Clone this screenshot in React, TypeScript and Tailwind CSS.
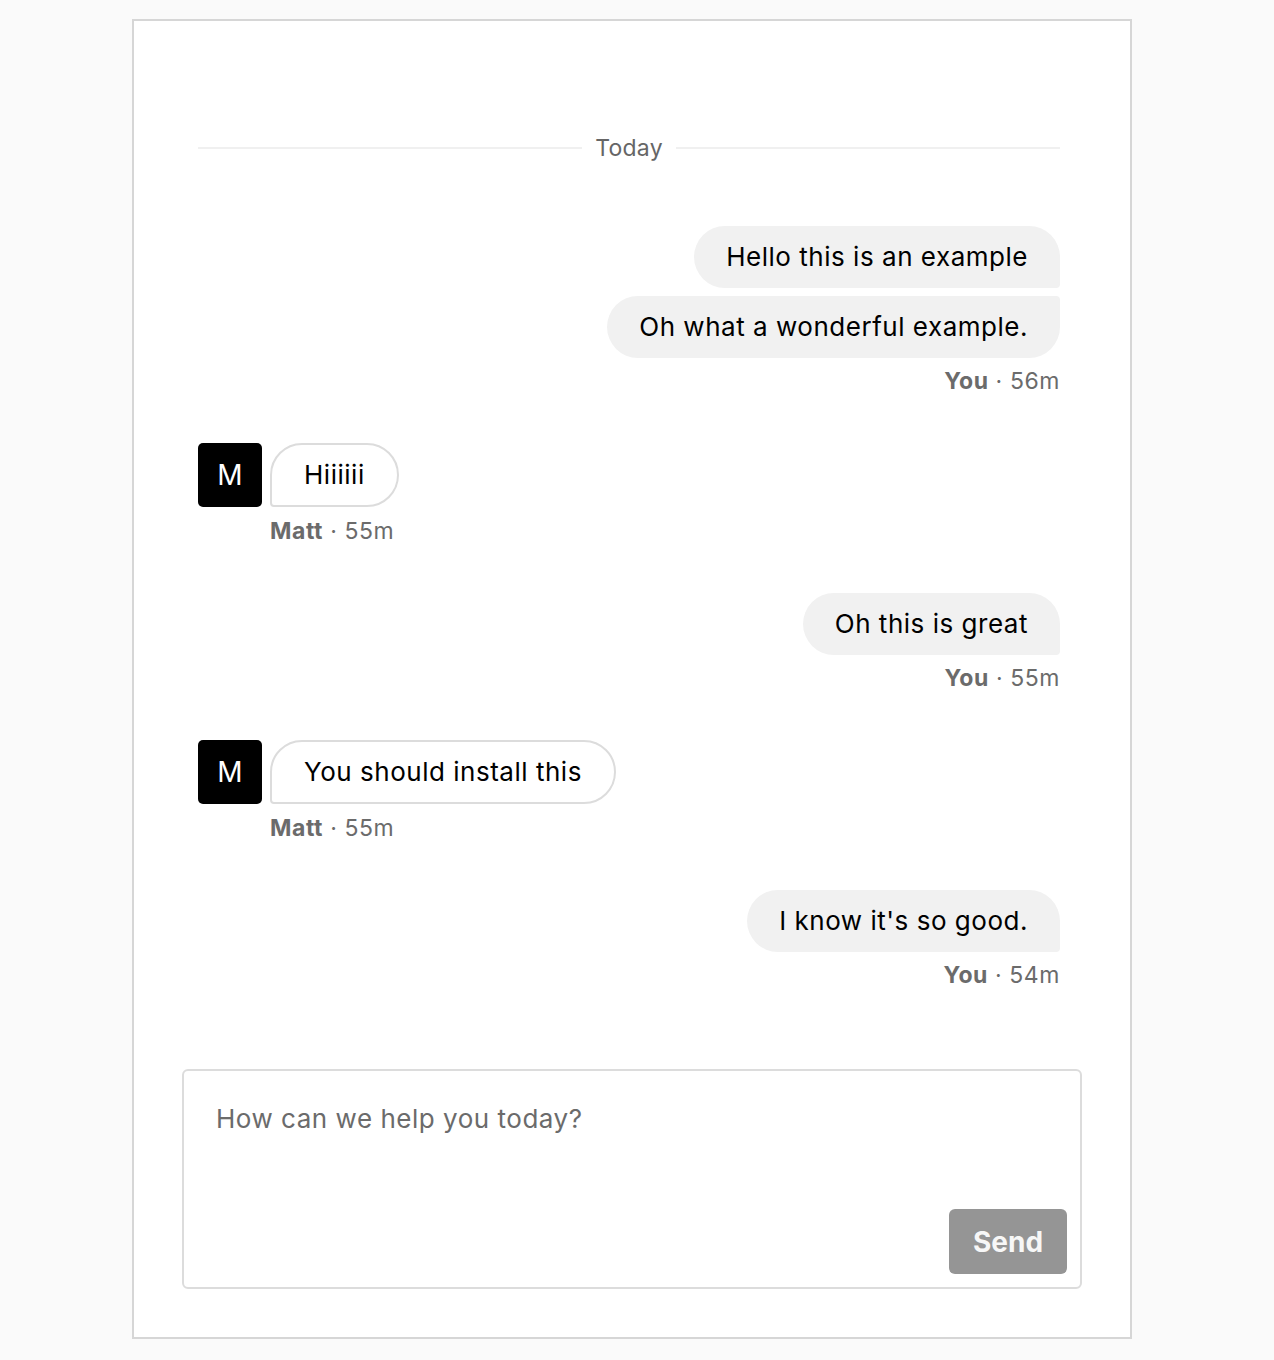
import React from "react";

type Msg = { id: number; from: "you" | "matt"; texts: string[]; time: string };

const messages: Msg[] = [
  { id: 1, from: "you", texts: ["Hello this is an example", "Oh what a wonderful example."], time: "56m" },
  { id: 2, from: "matt", texts: ["Hiiiiii"], time: "55m" },
  { id: 3, from: "you", texts: ["Oh this is great"], time: "55m" },
  { id: 4, from: "matt", texts: ["You should install this"], time: "55m" },
  { id: 5, from: "you", texts: ["I know it's so good."], time: "54m" },
];

const Meta = ({ name, time, mine }: { name: string; time: string; mine?: boolean }) => (
  <p
    className={`${mine ? "mt-2" : "mt-[9px]"} text-[23px] leading-[30px] tracking-[0.025em] text-[#6b6b6b]`}
  >
    <span className="font-bold">{name}</span> · {time}
  </p>
);

const MyGroup = ({ msg }: { msg: Msg }) => (
  <div className="flex flex-col items-end">
    <div className="flex flex-col items-end gap-2">
      {msg.texts.map((t, i) => (
        <div
          key={i}
          className={`rounded-[31px] bg-[#f1f1f1] px-8 py-4 text-[26px] leading-[30px] tracking-[0.02em] text-black ${
            i === 0 ? "rounded-br-[4px]" : "rounded-tr-[4px]"
          }`}
        >
          {t}
        </div>
      ))}
    </div>
    <Meta name="You" time={msg.time} mine />
  </div>
);

const TheirGroup = ({ msg }: { msg: Msg }) => (
  <div className="flex items-start gap-2">
    <div className="flex h-16 w-16 shrink-0 items-center justify-center rounded-[5px] bg-black text-[28px] text-white">
      M
    </div>
    <div className="flex flex-col items-start">
      {msg.texts.map((t, i) => (
        <div
          key={i}
          className="rounded-[32px] rounded-bl-[4px] border-2 border-[#dcdcdc] bg-white px-[32px] py-[15px] text-[26px] leading-[30px] tracking-[0.02em] text-black"
        >
          {t}
        </div>
      ))}
      <Meta name="Matt" time={msg.time} />
    </div>
  </div>
);

export default function App() {
  return (
    <div className="min-h-screen bg-[#fafafa] pt-[19px] font-['Inter',sans-serif]">
      <div className="ml-[132px] w-[1000px] border-2 border-[#d6d6d6] bg-white px-12 pb-12 pt-[112px]">
        <div className="pl-4 pr-[22px]">
          <div className="flex items-center gap-[13px]">
            <div className="h-[2px] flex-1 bg-[#f0f0f0]" />
            <span className="text-[23px] leading-[30px] tracking-[0.01em] text-[#666]">Today</span>
            <div className="h-[2px] flex-1 bg-[#f0f0f0]" />
          </div>

          <div className="mt-[63px] flex flex-col gap-[47px]">
            {messages.map((m) =>
              m.from === "you" ? <MyGroup key={m.id} msg={m} /> : <TheirGroup key={m.id} msg={m} />
            )}
          </div>
        </div>

        <div className="mt-[79px] flex flex-col rounded-[6px] border-2 border-[#dcdcdc]">
          <textarea
            placeholder="How can we help you today?"
            className="h-[138px] resize-none bg-transparent px-8 pt-[33px] text-[26px] leading-[30px] tracking-[0.02em] text-black outline-none placeholder:text-[#6b6b6b]"
          />
          <div className="flex justify-end px-[13px] pb-[13px]">
            <button className="h-[65px] w-[118px] rounded-[6px] bg-[#959595] text-[28px] font-bold text-[#f7f7f7]">
              Send
            </button>
          </div>
        </div>
      </div>
    </div>
  );
}
